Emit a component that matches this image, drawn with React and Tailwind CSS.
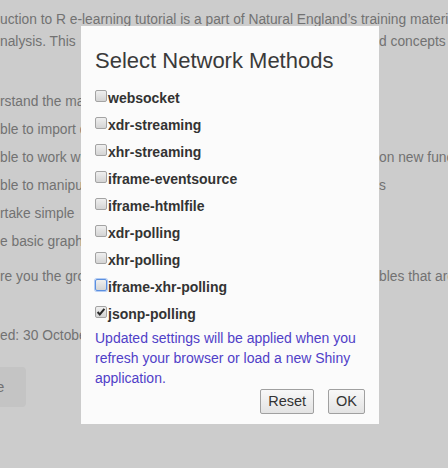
import React from "react";

const font = "font-['Liberation_Sans',Arial,Helvetica,sans-serif]";

function BgLine({ left, right, h = "h-[28px] leading-[28px]" }) {
  return (
    <div className={`flex whitespace-nowrap overflow-hidden ${h}`}>
      <span className="w-[81px] shrink-0 overflow-hidden">{left}</span>
      <span className="w-[298px] shrink-0" />
      <span className="min-w-0 overflow-hidden">{right}</span>
    </div>
  );
}

function Box({ checked, focus }) {
  return (
    <span
      className={`mt-[2px] -ml-[1px] mr-[1px] w-[12px] h-[12px] shrink-0 rounded-[2px] border bg-gradient-to-b from-[#efefef] to-[#d4d4d4] flex items-center justify-center ${
        focus ? "border-[#5b8fe0] shadow-[0_0_0_1px_#b5cdf3]" : "border-[#a3a3a3]"
      }`}
    >
      {checked && (
        <svg width="10" height="10" viewBox="0 0 10 10">
          <path d="M1.6 5 L3.8 7.4 L8.4 1.8" fill="none" stroke="#2a2a2a" strokeWidth="2" />
        </svg>
      )}
    </span>
  );
}

const methods = [
  "websocket",
  "xdr-streaming",
  "xhr-streaming",
  "iframe-eventsource",
  "iframe-htmlfile",
  "xdr-polling",
  "xhr-polling",
  "iframe-xhr-polling",
  "jsonp-polling",
];

export default function App() {
  return (
    <div className={`relative w-[448px] h-[468px] overflow-hidden bg-[#cccccc] text-[#727272] text-[13.8px] ${font}`}>
      {/* background page */}
      <div className="pt-[9px]">
        <div className="h-[22px] leading-[22px] whitespace-nowrap overflow-hidden">
          uction to R e-learning tutorial is a part of Natural England’s training materials for
        </div>
        <BgLine left="nalysis. This" right="d concepts" h="h-[22px] leading-[22px]" />
        <div className="h-[35px]" />
        <BgLine left="rstand the main" right="" />
        <BgLine left="ble to import data" right="" />
        <BgLine left="ble to work with" right="on new functions" />
        <BgLine left="ble to manipulate" right="s" />
        <BgLine left="rtake simple" right="" />
        <BgLine left="e basic graphs" right="" />
        <div className="h-[10px]" />
        <BgLine left="re you the grounding" right="bles that are" h="h-[22px] leading-[22px]" />
        <div className="h-[37px]" />
        <BgLine left="ed: 30 October" right="" h="h-[22px] leading-[22px]" />
        <div className="mt-[20px] w-[26px] h-[40px] rounded-r-[4px] bg-[#c4c4c4] flex items-center">
          <span className="-ml-[4px] text-[15px]">e</span>
        </div>
      </div>

      {/* modal */}
      <div className="absolute left-[81px] top-[26px] w-[298px] h-[398px] bg-[#fbfbfb] px-[15px] pt-[23px] text-[#333333]">
        <div className="-ml-[1px] text-[22px] leading-[24px] h-[24px] text-[#3a3a3a]">Select Network Methods</div>
        <div className="mt-[15px] flex flex-col gap-[7px]">
          {methods.map((m) => (
            <div key={m} className="flex h-[20px] items-start">
              <Box checked={m === "jsonp-polling"} focus={m === "iframe-xhr-polling"} />
              <span className="font-bold leading-[20px] text-[14px]">{m}</span>
            </div>
          ))}
        </div>
        <div className="-ml-[1px] mt-[4px] leading-[20px] text-[14px] text-[#5040c8]">
          Updated settings will be applied when you refresh your browser or load a new Shiny application.
        </div>
        <div className="mt-[1px] flex justify-end gap-[14px] -mr-[1px]">
          <button className="h-[25px] px-[7px] border border-[#a0a0a0] rounded-[2px] bg-gradient-to-b from-[#f8f8f8] to-[#e3e3e3] text-[14.5px] text-[#333] leading-[23px]">
            Reset
          </button>
          <button className="h-[25px] px-[7px] border border-[#a0a0a0] rounded-[2px] bg-gradient-to-b from-[#f8f8f8] to-[#e3e3e3] text-[14.5px] text-[#333] leading-[23px]">
            OK
          </button>
        </div>
      </div>
    </div>
  );
}
